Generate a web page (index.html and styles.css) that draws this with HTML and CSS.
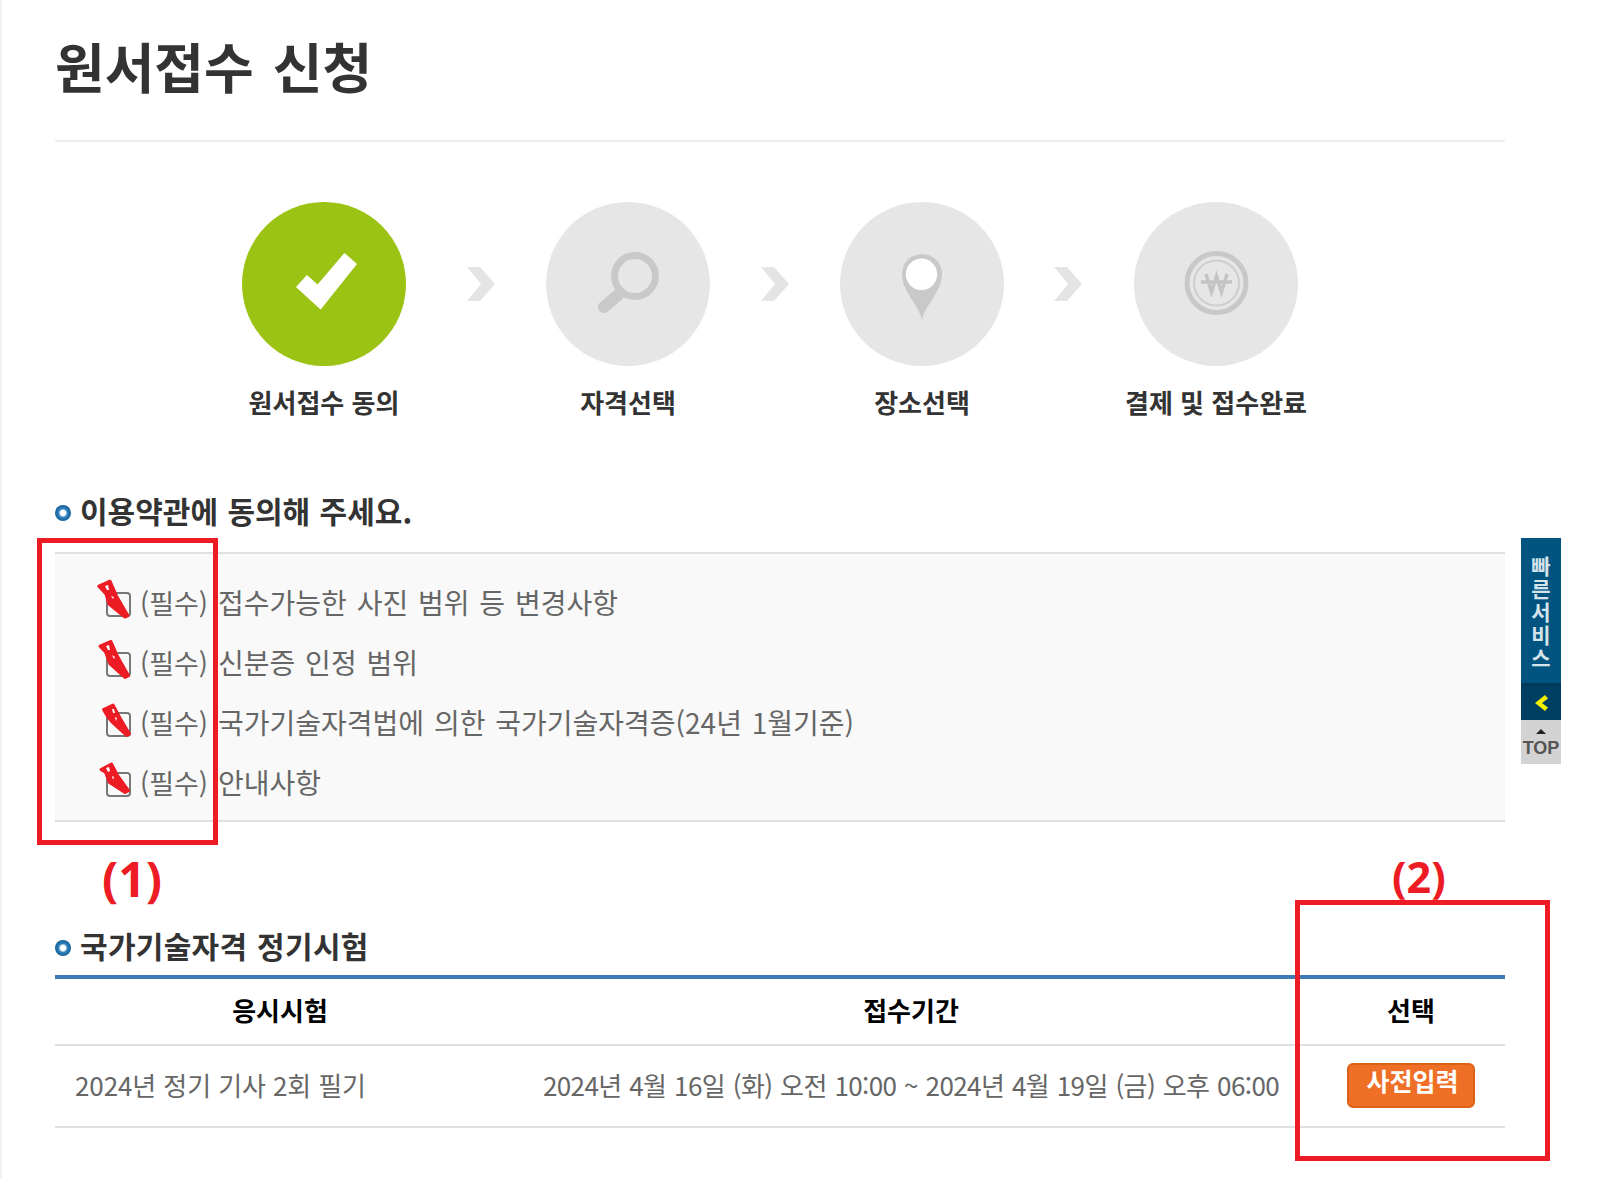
FILE: index.html
```html
<!DOCTYPE html>
<html lang="ko">
<head>
<meta charset="utf-8">
<title>원서접수 신청</title>
<link rel="stylesheet" href="styles.css">
</head>
<body>
<main class="page">
  <h1 class="title">원서접수 신청</h1>

  <ol class="steps">
    <li class="step">
      <span class="disc disc-on">
        <svg viewBox="0 0 164 164" width="164" height="164"><path d="M55 85 L65 74 L75.700 83.500 L102.500 52 L114 62 L78.500 106.500 Z" fill="#fff" stroke="#fff" stroke-width="1.500" stroke-linejoin="round"/></svg>
      </span>
      <span class="step-label">원서접수 동의</span>
    </li>
    <li class="arrow arrow-first"><svg viewBox="0 0 28 34" width="28" height="34"><path d="M0 0H13L28 17L13 34H0L14 17Z" fill="#e4e4e4"/></svg></li>
    <li class="step">
      <span class="disc">
        <svg viewBox="0 0 164 164" width="164" height="164"><circle cx="89" cy="74" r="20.500" fill="none" stroke="#c9c9c9" stroke-width="7"/><path d="M72 93 L58 105" stroke="#c9c9c9" stroke-width="12" stroke-linecap="round"/></svg>
      </span>
      <span class="step-label">자격선택</span>
    </li>
    <li class="arrow"><svg viewBox="0 0 28 34" width="28" height="34"><path d="M0 0H13L28 17L13 34H0L14 17Z" fill="#e4e4e4"/></svg></li>
    <li class="step">
      <span class="disc">
        <svg viewBox="0 0 164 164" width="164" height="164"><path d="M82 118 C79 103 62 90 62 72 A20 20 0 0 1 102 72 C102 90 85 103 82 118Z" fill="#c9c9c9"/><circle cx="81.500" cy="72.300" r="15.700" fill="#fff"/></svg>
      </span>
      <span class="step-label">장소선택</span>
    </li>
    <li class="arrow arrow-last"><svg viewBox="0 0 28 34" width="28" height="34"><path d="M0 0H13L28 17L13 34H0L14 17Z" fill="#e4e4e4"/></svg></li>
    <li class="step">
      <span class="disc">
        <svg class="soft" viewBox="0 0 164 164" width="164" height="164"><circle cx="82.500" cy="81" r="29.500" fill="none" stroke="#c8c8c8" stroke-width="5"/><circle cx="82.500" cy="81" r="22.500" fill="none" stroke="#cdcdcd" stroke-width="2"/><path d="M72 72 L77.500 90 L82.500 74 L87.500 90 L93 72 M67 80 H98" fill="none" stroke="#c4c4c4" stroke-width="3.500"/></svg>
      </span>
      <span class="step-label">결제 및 접수완료</span>
    </li>
  </ol>

  <h2 class="section-title section-title-agree">이용약관에 동의해 주세요.</h2>
  <ul class="terms">
    <li class="term">
      <span class="mark"><svg class="scribble" viewBox="0 0 36 44" width="36" height="44"><path d="M1.800 6.200 L13 1.200 L20 17 L31 35.700 L28 37 L12 24 L9 14 Z" fill="#ed1c24" stroke="#ed1c24" stroke-width="3" stroke-linejoin="round"/><path d="M8 6 L11 5 L12 10 L10 10Z M14 16 L17 17 L16 19Z" fill="#fff"/></svg></span>
      <span class="req">(필수)</span><span class="term-text">접수가능한 사진 범위 등 변경사항</span>
    </li>
    <li class="term">
      <span class="mark"><svg class="scribble" viewBox="0 0 36 44" width="36" height="44"><path d="M3 6.200 L14 1.500 L20.300 16 L31.500 35.700 L28 37.500 L13 24 L8.500 12 Z" fill="#ed1c24" stroke="#ed1c24" stroke-width="3" stroke-linejoin="round"/><path d="M9 6 L12 5 L13 10 L11 10Z M15 15 L18 17 L17 19Z" fill="#fff"/></svg></span>
      <span class="req">(필수)</span><span class="term-text">신분증 인정 범위</span>
    </li>
    <li class="term">
      <span class="mark"><svg class="scribble" viewBox="0 0 36 44" width="36" height="44"><path d="M6.500 9.500 L16 5 L23 18 L32.500 34 L29.700 35.500 L16 23 L11 17.300 Z" fill="#ed1c24" stroke="#ed1c24" stroke-width="3" stroke-linejoin="round"/><path d="M15 9 L17 9 L18 13 L16 13Z M18 17 L20 18 L19 21Z" fill="#fff"/></svg></span>
      <span class="req">(필수)</span><span class="term-text">국가기술자격법에 의한 국가기술자격증(24년 1월기준)</span>
    </li>
    <li class="term">
      <span class="mark"><svg class="scribble" viewBox="0 0 36 44" width="36" height="44"><path d="M4 9.500 L14.500 4 L20.300 15 L31.500 30.700 L28 32.500 L12.500 22.500 L8.500 12.300 Z" fill="#ed1c24" stroke="#ed1c24" stroke-width="3" stroke-linejoin="round"/><path d="M9 8 L12 7 L13 11 L11 12Z M15 16 L17 17 L16 20Z" fill="#fff"/></svg></span>
      <span class="req">(필수)</span><span class="term-text">안내사항</span>
    </li>
  </ul>

  <h2 class="section-title section-title-exam">국가기술자격 정기시험</h2>
  <table class="exam">
    <thead>
      <tr><th class="col-a">응시시험</th><th class="col-b">접수기간</th><th class="col-c">선택</th></tr>
    </thead>
    <tbody>
      <tr>
        <td class="cell-name">2024년 정기 기사 2회 필기</td>
        <td class="cell-date">2024년 4월 16일 (화) 오전 10:00 ~ 2024년 4월 19일 (금) 오후 06:00</td>
        <td class="cell-action"><button class="btn" type="button">사전입력</button></td>
      </tr>
    </tbody>
  </table>
</main>

<aside class="quick">
  <div class="quick-title">빠른서비스</div>
  <div class="quick-toggle"><svg viewBox="0 0 16 18" width="16" height="18"><path d="M12 1 L2 9 L12 17 L15 13.500 L9 9 L15 4.500Z" fill="#f2ef00"/></svg></div>
  <div class="quick-top"><span class="top-caret"></span><span class="top-text">TOP</span></div>
</aside>

<span class="note-label note-label-one">(1)</span>
<span class="note-label note-label-two">(2)</span>
<div class="note note-one"></div>
<div class="note note-two"></div>
</body>
</html>
```

FILE: styles.css
```css
*, *::before, *::after { box-sizing: border-box; }
html, body { margin: 0; padding: 0; }
body {
  position: relative;
  height: 1179px;
  overflow: hidden;
  background: #fff;
  color: #333;
  font-family: "Noto Sans CJK KR", "Liberation Sans", sans-serif;
}
body::before {
  content: "";
  position: absolute;
  left: 0; top: 0; bottom: 0;
  width: 3px;
  background: linear-gradient(to right, #ececec, #fff);
}
.page { width: 1505px; padding: 0 0 0 55px; }
.title {
  margin: 0;
  padding-top: 28px;
  height: 142px;
  border-bottom: 2px solid #ececec;
  font-size: 54px;
  line-height: 76px;
  font-weight: 700;
  word-spacing: 4px;
  color: #333;
}
.steps {
  list-style: none;
  margin: 0;
  padding: 60px 0 0 187px;
  display: flex;
  align-items: flex-start;
}
.step { width: 164px; display: flex; flex-direction: column; align-items: center; }
.disc { display: block; width: 164px; height: 164px; border-radius: 50%; background: #e6e6e6; }
.disc svg { display: block; }
.soft { filter: blur(0.6px); }
.disc-on { background: #9bc314; }
.step-label { margin-top: 16px; font-size: 26px; line-height: 40px; font-weight: 700; color: #333; white-space: nowrap; }
.arrow { width: 28px; margin: 65px 51px 0; }
.arrow-first { margin-left: 61px; }
.arrow-last { margin-left: 50px; margin-right: 52px; }
.arrow svg { display: block; }
.section-title {
  margin: 0;
  padding-left: 25px;
  position: relative;
  font-size: 30px;
  line-height: 44px;
  font-weight: 700;
  word-spacing: 1px;
  color: #333;
}
.section-title::before {
  content: "";
  position: absolute;
  left: 0; top: 17px;
  width: 16px; height: 16px;
  border-radius: 50%;
  background: radial-gradient(circle at 50% 50%, #fff 0 22%, #2f7fbc 40%, #0f5a92 75%, rgba(15, 90, 146, 0.3) 100%);
}
.section-title-agree { margin-top: 66px; }
.terms {
  list-style: none;
  margin: 20px 0 0;
  padding: 18px 0 8px 51px;
  background: #f9f9f9;
  border-top: 2px solid #e0e0e0;
  border-bottom: 2px solid #e0e0e0;
}
.term {
  display: flex;
  align-items: center;
  height: 60px;
  font-size: 28px;
  word-spacing: 2px;
  color: #666;
}
.mark {
  position: relative;
  display: block;
  width: 25px; height: 25px;
  margin-top: 5px;
  border: 2px solid #777;
  border-radius: 4px;
  margin-right: 9px;
  flex: none;
}
.scribble { position: absolute; left: -11px; top: -14px; overflow: visible; }
.req { width: 78px; flex: none; font-size: 27px; }
.term-text { white-space: nowrap; }
.section-title-exam { margin-top: 101px; letter-spacing: 0.3px; }
.exam {
  width: 100%;
  margin-top: 8px;
  border-collapse: collapse;
  table-layout: fixed;
  border-top: 4px solid #3c7ab8;
}
.col-a { width: 450px; }
.col-b { width: 812px; }
.col-c { width: 188px; }
.exam th {
  height: 68px;
  font-size: 26px;
  font-weight: 700;
  color: #000;
  border-bottom: 2px solid #e0e0e0;
  padding: 0 0 4px;
}
.exam td {
  height: 82px;
  font-size: 26px;
  color: #666;
  border-bottom: 2px solid #e0e0e0;
  padding: 0 0 4px;
  white-space: nowrap;
}
.exam td.cell-name { padding-left: 20px; letter-spacing: -0.1px; }
.cell-date { text-align: center; letter-spacing: -0.6px; word-spacing: 1px; }
.exam td.cell-action { text-align: center; padding: 0; }
.btn {
  display: inline-block;
  width: 128px; height: 45px;
  padding: 0 0 11px 3px;
  margin-bottom: 3px;
  background: #ee6f25;
  border: 2px solid #dc6219;
  border-radius: 6px;
  color: #fff;
  font: 700 25px/30px "Noto Sans CJK KR", sans-serif;
}
.quick { position: absolute; left: 1521px; top: 538px; width: 40px; }
.quick-title {
  height: 145px;
  padding: 16px 9px 0;
  background: #00547f;
  color: #d5e3eb;
  font-size: 21px;
  line-height: 23px;
  font-weight: 700;
  text-align: center;
  width: 40px;
}
.quick-toggle {
  height: 37px;
  background: #003f62;
  border-top: 3px solid #00395a;
  display: flex;
  align-items: center;
  justify-content: center;
}
.quick-top {
  height: 44px;
  background: #d3d3d3;
  display: flex;
  flex-direction: column;
  align-items: center;
  padding-top: 9px;
}
.top-caret { width: 0; height: 0; border: 5px solid transparent; border-top: 0; border-bottom: 5px solid #222; }
.top-text { margin-top: 4px; font: 700 18px/20px "Liberation Sans", sans-serif; color: #555; }
.note { position: absolute; border: 5px solid #ed1c24; }
.note-one { left: 37px; top: 538px; width: 181px; height: 307px; }
.note-two { left: 1295px; top: 900px; width: 255px; height: 261px; }
.note-label {
  position: absolute;
  color: #ed1c24;
  font-family: "Open Sans", "Liberation Sans", sans-serif;
  font-weight: 700;
  font-size: 48px;
  line-height: 60px;
}
.note-label-one { left: 102px; top: 849px; }
.note-label-two { left: 1392px; top: 847px; font-size: 43px; }
```
